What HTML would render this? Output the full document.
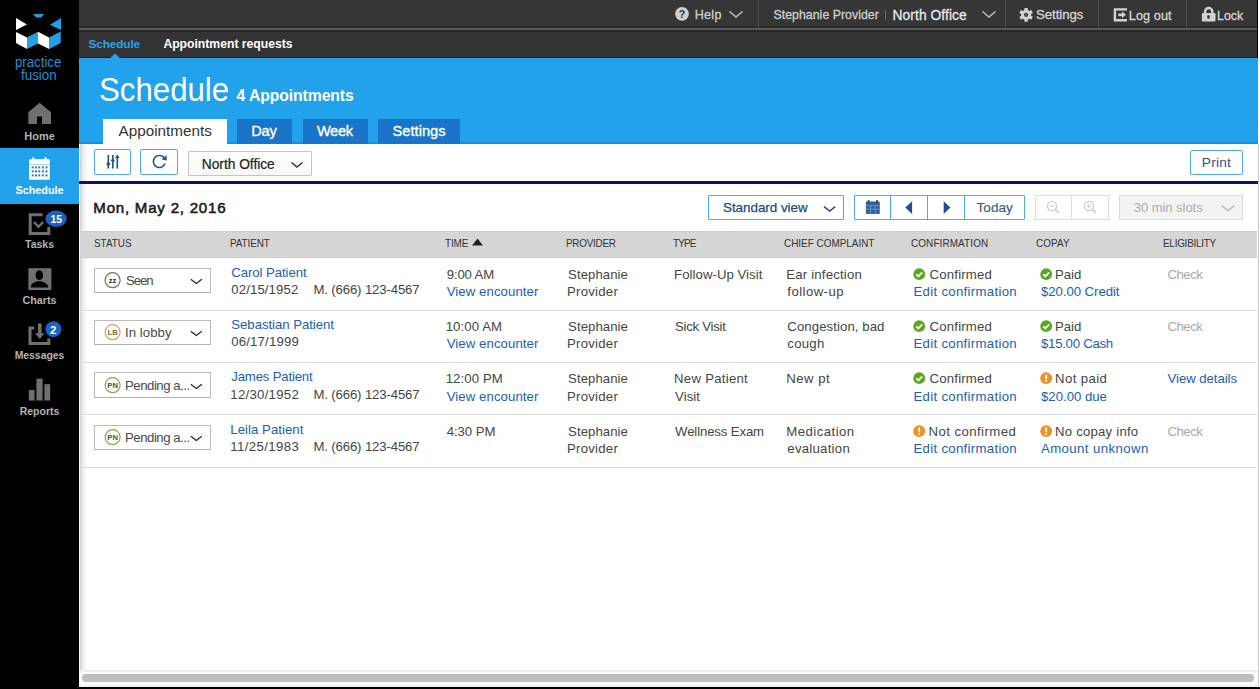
<!DOCTYPE html>
<html><head><meta charset="utf-8"><style>
html,body{margin:0;padding:0;}
body{width:1260px;height:689px;overflow:hidden;position:relative;background:#fff;font-family:"Liberation Sans",sans-serif;}
.t{position:absolute;white-space:nowrap;}
.r{position:absolute;}
</style></head><body>
<div class="r" style="left:0px;top:0px;width:79px;height:689px;background:#000;"></div>
<svg class="r" style="left:14px;top:12px;" width="50" height="40" viewBox="0 0 50 40"><polygon points="19,2 30,2 27,5.6 22,5.6" fill="#22a0e6"/><polygon points="2,6 13,12.5 2,18" fill="#fff"/><polygon points="47,6 47,18 36,12.8" fill="#22a0e6"/><polygon points="2,20 13,25.6 13,37 2,31" fill="#fff"/><polygon points="13,25.6 24,19.8 24,31.6 13,37" fill="#22a0e6"/><polygon points="24,19.8 35,25.6 35,37 24,31.6" fill="#fff"/><polygon points="35,25.6 46.7,19.6 46.7,31 35,37" fill="#22a0e6"/></svg>
<div class="t" style="left:15.30px;top:51.60px;font-size:15.4px;line-height:19px;color:#1e8fd6;transform:scaleX(0.8587999599433483);transform-origin:0 0;">practice</div>
<div class="t" style="left:20.80px;top:64.80px;font-size:15.4px;line-height:19px;color:#1e8fd6;transform:scaleX(0.8689272631735564);transform-origin:0 0;">fusion</div>
<svg class="r" style="left:27px;top:101px;" width="26" height="25" viewBox="0 0 26 25"><polygon points="12.6,1.7 24,11.2 24,23 15,23 15,15.5 10,15.5 10,23 1.3,23 1.3,11.2" fill="#6f6f6f"/></svg>
<div class="t" style="left:39.50px;top:129.20px;font-size:11px;line-height:14px;color:#b3b3b3;font-weight:700;transform:translateX(-50%);">Home</div>
<div class="r" style="left:0px;top:148px;width:79px;height:56px;background:#22a2ea;"></div>
<svg class="r" style="left:28px;top:156px;" width="23" height="25" viewBox="0 0 23 25"><rect x="1" y="3.2" width="20.8" height="20.6" rx="1" fill="#fff"/><rect x="4.2" y="1.5" width="2.2" height="3" fill="#fff"/><rect x="16.5" y="1.5" width="2.2" height="3" fill="#fff"/><rect x="1" y="8" width="20.8" height="0.8" fill="#8fd0f5"/><rect x="3.7" y="10.4" width="2" height="2" fill="#2f75b5"/><rect x="7" y="10.4" width="2" height="2" fill="#2f75b5"/><rect x="10.2" y="10.4" width="2" height="2" fill="#2f75b5"/><rect x="13.9" y="10.4" width="2" height="2" fill="#2f75b5"/><rect x="17.5" y="10.4" width="2" height="2" fill="#2f75b5"/><rect x="3.7" y="14.4" width="2" height="2" fill="#2f75b5"/><rect x="7" y="14.4" width="2" height="2" fill="#2f75b5"/><rect x="10.2" y="14.4" width="2" height="2" fill="#2f75b5"/><rect x="13.9" y="14.4" width="2" height="2" fill="#2f75b5"/><rect x="17.5" y="14.4" width="2" height="2" fill="#2f75b5"/><rect x="3.7" y="18.4" width="2" height="2" fill="#2f75b5"/><rect x="7" y="18.4" width="2" height="2" fill="#2f75b5"/><rect x="10.2" y="18.4" width="2" height="2" fill="#2f75b5"/><rect x="13.9" y="18.4" width="2" height="2" fill="#2f75b5"/><rect x="17.5" y="18.4" width="2" height="2" fill="#2f75b5"/></svg>
<div class="t" style="left:39.50px;top:182.60px;font-size:10.8px;line-height:14px;color:#fff;font-weight:700;transform:translateX(-50%);">Schedule</div>
<svg class="r" style="left:27px;top:209px;" width="42" height="28" viewBox="0 0 42 28"><path d="M15.5,5.8 H3.2 V24.5 H21.8 V18" fill="none" stroke="#707070" stroke-width="3"/><path d="M7,13 L11.5,17.8 L16.2,13" fill="none" stroke="#707070" stroke-width="2.4"/><ellipse cx="29.1" cy="9.8" rx="10.6" ry="8.2" fill="#1a64bf"/></svg>
<div class="t" style="left:56.30px;top:212.60px;font-size:10.5px;line-height:13px;color:#fff;font-weight:700;transform:translateX(-50%);">15</div>
<div class="t" style="left:39.50px;top:238.40px;font-size:10.5px;line-height:13px;color:#b3b3b3;font-weight:700;transform:translateX(-50%);">Tasks</div>
<svg class="r" style="left:28px;top:268px;" width="24" height="23" viewBox="0 0 24 23"><rect x="0.4" y="0.2" width="23" height="21.8" fill="#707070"/><ellipse cx="11.3" cy="7.2" rx="3.7" ry="4.9" fill="#000"/><path d="M2.6,19.5 C3,15.5 6,14.2 9.3,13.2 L13.3,13.2 C16.6,14.2 19.8,15.5 20.4,19.5 Z" fill="#000"/></svg>
<div class="t" style="left:39.50px;top:292.80px;font-size:10.8px;line-height:14px;color:#b3b3b3;font-weight:700;transform:translateX(-50%);">Charts</div>
<svg class="r" style="left:27px;top:321px;" width="36" height="26" viewBox="0 0 36 26"><path d="M7.3,7 H3 V22.4 H21.8 V17.5" fill="none" stroke="#707070" stroke-width="3"/><rect x="11" y="2.5" width="3.6" height="10.5" fill="#707070"/><polygon points="8,12.3 17.5,12.3 12.8,18" fill="#707070"/><circle cx="26.4" cy="8.2" r="8" fill="#1a64bf"/></svg>
<div class="t" style="left:53.30px;top:323.20px;font-size:11.5px;line-height:14px;color:#fff;font-weight:700;transform:translateX(-50%);">2</div>
<div class="t" style="left:39.50px;top:349.40px;font-size:10.4px;line-height:13px;color:#b3b3b3;font-weight:700;transform:translateX(-50%);">Messages</div>
<svg class="r" style="left:28px;top:378px;" width="24" height="24" viewBox="0 0 24 24"><rect x="0.8" y="12" width="5.8" height="10.5" fill="#707070"/><rect x="8.4" y="0.7" width="6.2" height="21.8" fill="#707070"/><rect x="16.4" y="6.2" width="5.8" height="16.3" fill="#707070"/></svg>
<div class="t" style="left:39.50px;top:404.60px;font-size:10.5px;line-height:13px;color:#b3b3b3;font-weight:700;transform:translateX(-50%);">Reports</div>
<div class="r" style="left:79px;top:0px;width:1178px;height:28px;background:#363636;"></div>
<div class="r" style="left:79px;top:26px;width:1178px;height:1.5px;background:#2c2c2c;"></div>
<div class="r" style="left:79px;top:28px;width:1178px;height:2px;background:#585858;"></div>
<div class="r" style="left:79px;top:30px;width:1178px;height:28px;background:#333333;"></div>
<div class="r" style="left:79px;top:30px;width:1178px;height:1.5px;background:#272727;"></div>
<div class="r" style="left:79px;top:57px;width:1178px;height:1.5px;background:#1f1f1f;"></div>
<div class="r" style="left:1257px;top:0px;width:1.2px;height:58px;background:#000;"></div>
<div class="r" style="left:757.5px;top:0px;width:1px;height:28px;background:#4f4f4f;"></div>
<div class="r" style="left:1004.5px;top:0px;width:1px;height:28px;background:#4f4f4f;"></div>
<div class="r" style="left:1098px;top:0px;width:1px;height:28px;background:#4f4f4f;"></div>
<div class="r" style="left:1186px;top:0px;width:1px;height:28px;background:#4f4f4f;"></div>
<svg class="r" style="left:674px;top:6px;" width="16" height="16" viewBox="0 0 16 16"><circle cx="8" cy="7.8" r="6.9" fill="#d0d0d0"/><text x="8" y="11.7" text-anchor="middle" font-family="Liberation Sans" font-weight="700" font-size="10.5" fill="#303030">?</text></svg>
<div class="t" style="left:694.70px;top:7.20px;font-size:12.5px;line-height:16px;color:#cfcfcf;letter-spacing:0.315px;-webkit-text-stroke:0.3px #cfcfcf;">Help</div>
<svg class="r" style="left:728px;top:10px;" width="16" height="9" viewBox="0 0 16 9"><path d="M1.5,1.5 L8,7 L14.5,1.5" fill="none" stroke="#bdbdbd" stroke-width="1.6"/></svg>
<div class="t" style="left:773.50px;top:8.40px;font-size:12.35px;line-height:15px;color:#cfcfcf;letter-spacing:0.019px;-webkit-text-stroke:0.3px #cfcfcf;">Stephanie Provider</div>
<div class="r" style="left:885px;top:9.5px;width:1px;height:10.5px;background:#6a6a6a;"></div>
<div class="t" style="left:892.60px;top:7.20px;font-size:13.8px;line-height:17px;color:#e6e6e6;letter-spacing:0.065px;-webkit-text-stroke:0.3px #e6e6e6;">North Office</div>
<svg class="r" style="left:981px;top:10px;" width="16" height="9" viewBox="0 0 16 9"><path d="M1.5,1.5 L8,7 L14.5,1.5" fill="none" stroke="#bdbdbd" stroke-width="1.6"/></svg>
<svg class="r" style="left:1018px;top:7px;" width="16" height="16" viewBox="0 0 16 16"><g transform="translate(8.1,7.85)" fill="#d2d2d2"><rect x="-1.7" y="-6.9" width="3.4" height="3.4" rx="0.6" transform="rotate(0)"/><rect x="-1.7" y="-6.9" width="3.4" height="3.4" rx="0.6" transform="rotate(60)"/><rect x="-1.7" y="-6.9" width="3.4" height="3.4" rx="0.6" transform="rotate(120)"/><rect x="-1.7" y="-6.9" width="3.4" height="3.4" rx="0.6" transform="rotate(180)"/><rect x="-1.7" y="-6.9" width="3.4" height="3.4" rx="0.6" transform="rotate(240)"/><rect x="-1.7" y="-6.9" width="3.4" height="3.4" rx="0.6" transform="rotate(300)"/><circle r="5.1" /><circle r="2.1" fill="#353535"/><circle r="0.8" fill="#888"/></g></svg>
<div class="t" style="left:1036.00px;top:7.40px;font-size:13.2px;line-height:16px;color:#d6d6d6;letter-spacing:-0.037px;-webkit-text-stroke:0.3px #d6d6d6;">Settings</div>
<svg class="r" style="left:1112px;top:7px;" width="16" height="16" viewBox="0 0 16 16"><path d="M15,2.4 H2.9 V13.3 H15" fill="none" stroke="#d2d2d2" stroke-width="2.4"/><path d="M6.3,7.85 H10.5" stroke="#d2d2d2" stroke-width="2.6"/><polygon points="10,4.6 14,7.85 10,11.1" fill="#d2d2d2"/></svg>
<div class="t" style="left:1128.80px;top:7.60px;font-size:12.65px;line-height:16px;color:#d6d6d6;letter-spacing:0.090px;-webkit-text-stroke:0.3px #d6d6d6;">Log out</div>
<svg class="r" style="left:1201px;top:6px;" width="16" height="17" viewBox="0 0 16 17"><path d="M4.1,7.5 V5.6 A3.6,3.6 0 0 1 11.3,5.6 V7.5" fill="none" stroke="#d2d2d2" stroke-width="2.5"/><rect x="0.9" y="7" width="13.6" height="8.5" rx="1.2" fill="#d2d2d2"/><ellipse cx="7.5" cy="10.9" rx="1.3" ry="2" fill="#353535"/></svg>
<div class="t" style="left:1217.00px;top:8.60px;font-size:12.3px;line-height:15px;color:#d6d6d6;letter-spacing:0.058px;-webkit-text-stroke:0.3px #d6d6d6;">Lock</div>
<div class="t" style="left:88.60px;top:36.20px;font-size:11.7px;line-height:15px;color:#2aa4ea;font-weight:700;letter-spacing:-0.066px;">Schedule</div>
<div class="t" style="left:163.40px;top:37.20px;font-size:12.2px;line-height:15px;color:#fff;font-weight:700;letter-spacing:-0.008px;">Appointment requests</div>
<div class="r" style="left:79px;top:58px;width:1179px;height:86px;background:#22a2ea;"></div>
<div class="r" style="left:79px;top:142px;width:1179px;height:2px;background:#1a8ed6;"></div>
<svg class="r" style="left:108px;top:53px;" width="14" height="6" viewBox="0 0 14 6"><polygon points="1,6 7,0.5 13,6" fill="#22a2ea"/></svg>
<div class="t" style="left:98.75px;top:69.00px;font-size:33px;line-height:41px;color:#fff;transform:scaleX(0.9456254670560756);transform-origin:0 0;">Schedule</div>
<div class="t" style="left:236.50px;top:86.00px;font-size:15.7px;line-height:20px;color:#fff;font-weight:700;letter-spacing:-0.054px;">4 Appointments</div>
<div class="r" style="left:103px;top:118.5px;width:124px;height:26px;background:#fff;"></div>
<div class="t" style="left:118.50px;top:120.60px;font-size:15.3px;line-height:19px;color:#333;letter-spacing:-0.017px;">Appointments</div>
<div class="r" style="left:237px;top:118.5px;width:55px;height:25.5px;background:#1a74c8;"></div>
<div class="t" style="left:251.30px;top:121.80px;font-size:14.6px;line-height:18px;color:#fff;letter-spacing:-0.228px;-webkit-text-stroke:0.35px #fff;">Day</div>
<div class="r" style="left:302.5px;top:118.5px;width:65.5px;height:25.5px;background:#1a74c8;"></div>
<div class="t" style="left:316.90px;top:121.80px;font-size:14.6px;line-height:18px;color:#fff;letter-spacing:-0.314px;-webkit-text-stroke:0.35px #fff;">Week</div>
<div class="r" style="left:378px;top:118.5px;width:82px;height:25.5px;background:#1a74c8;"></div>
<div class="t" style="left:392.60px;top:121.80px;font-size:14.6px;line-height:18px;color:#fff;letter-spacing:0.024px;-webkit-text-stroke:0.35px #fff;">Settings</div>
<div class="r" style="left:79px;top:144px;width:1178px;height:37px;background:#fff;"></div>
<div class="r" style="left:79px;top:144px;width:1px;height:545px;background:#f4f4f4;"></div>
<div class="r" style="left:80px;top:144px;width:1px;height:545px;background:#d2d2d2;"></div>
<div class="r" style="left:81px;top:144px;width:6px;height:545px;background:linear-gradient(90deg,#e2e2e2,rgba(255,255,255,0));"></div>
<div class="r" style="left:79px;top:181px;width:1179px;height:3px;background:#07136e;"></div>
<div class="r" style="left:93.5px;top:148.8px;width:37.5px;height:26px;background:#fff;box-sizing:border-box;border:1.5px solid #52aae3;border-radius:2px;"></div>
<svg class="r" style="left:104px;top:153px;" width="18" height="18" viewBox="0 0 18 18"><path d="M4.3,2 V15.5 M8.8,2 V15.5 M13.3,4.5 V15.5" stroke="#1f5190" stroke-width="1.6"/><polygon points="4.3,8.8 6.4,11 4.3,13.2 2.2,11" fill="#1f5190"/><polygon points="8.8,5.6 10.9,7.6 8.8,9.6 6.7,7.6" fill="#1f5190"/><polygon points="13.3,1.5 15.6,5 11,5" fill="#1f5190"/></svg>
<div class="r" style="left:140.2px;top:148.8px;width:37.5px;height:26px;background:#fff;box-sizing:border-box;border:1.5px solid #52aae3;border-radius:2px;"></div>
<svg class="r" style="left:150px;top:152px;" width="18" height="18" viewBox="0 0 18 18"><path d="M14.6,6.6 A6,6 0 1 0 15,11.5" fill="none" stroke="#1f5190" stroke-width="1.6"/><polygon points="16.5,3.2 16.8,8.6 11.6,7.6" fill="#1f5190"/></svg>
<div class="r" style="left:188px;top:151px;width:124px;height:25px;background:#fff;box-sizing:border-box;border:1px solid #c4c4c4;border-radius:1px;background:linear-gradient(#fff,#f8f8f8);"></div>
<div class="t" style="left:201.80px;top:155.60px;font-size:13.8px;line-height:17px;color:#222;letter-spacing:-0.035px;-webkit-text-stroke:0.2px #222;">North Office</div>
<svg class="r" style="left:290px;top:161px;" width="14" height="8" viewBox="0 0 14 8"><path d="M1.5,1.5 L7,6 L12.5,1.5" fill="none" stroke="#333" stroke-width="1.5"/></svg>
<div class="r" style="left:1190px;top:149.5px;width:53px;height:25px;background:#fff;box-sizing:border-box;border:1.5px solid #52aae3;border-radius:2px;"></div>
<div class="t" style="left:1201.80px;top:154.00px;font-size:13.7px;line-height:17px;color:#33507a;letter-spacing:0.215px;">Print</div>
<div class="r" style="left:1257.6px;top:144px;width:1.4px;height:545px;background:#cacaca;"></div>
<div class="t" style="left:93.30px;top:198.20px;font-size:15.1px;line-height:19px;color:#1a1a1a;letter-spacing:0.765px;-webkit-text-stroke:0.55px #1a1a1a;">Mon, May 2, 2016</div>
<div class="r" style="left:708px;top:194.7px;width:136px;height:25px;background:#fff;box-sizing:border-box;border:1.5px solid #52aae3;border-radius:1px;"></div>
<div class="t" style="left:723.00px;top:198.90px;font-size:13.4px;line-height:17px;color:#1e4a80;letter-spacing:-0.015px;-webkit-text-stroke:0.25px #1e4a80;">Standard view</div>
<svg class="r" style="left:821px;top:204px;" width="16" height="9" viewBox="0 0 16 9"><path d="M3,2.6 L8.6,7 L14.2,2.6" fill="none" stroke="#1f5190" stroke-width="1.5"/></svg>
<div class="r" style="left:854.3px;top:194.7px;width:170.5px;height:25px;background:#fff;box-sizing:border-box;border:1.5px solid #52aae3;border-radius:1px;"></div>
<div class="r" style="left:890px;top:194.7px;width:1.3px;height:25px;background:#52aae3;"></div>
<div class="r" style="left:926.8px;top:194.7px;width:1.3px;height:25px;background:#52aae3;"></div>
<div class="r" style="left:963.8px;top:194.7px;width:1.3px;height:25px;background:#52aae3;"></div>
<svg class="r" style="left:865px;top:199px;" width="16" height="16" viewBox="0 0 16 16"><rect x="0.9" y="2.6" width="13.9" height="12.4" rx="1" fill="#1f5190" opacity="0.9"/><rect x="2.6" y="1.2" width="2" height="3" fill="#1f5190"/><rect x="11" y="1.2" width="2" height="3" fill="#1f5190"/><path d="M0.9,6.6 H14.8 M0.9,10.2 H14.8 M5.5,6.6 V15 M10.2,6.6 V15" stroke="#6e9ac8" stroke-width="0.8"/></svg>
<svg class="r" style="left:903px;top:200px;" width="12" height="15" viewBox="0 0 12 15"><polygon points="9.1,1.2 9.1,13.9 2.3,7.5" fill="#1f5190"/></svg>
<svg class="r" style="left:941px;top:200px;" width="12" height="15" viewBox="0 0 12 15"><polygon points="2.7,1.2 2.7,13.9 9.4,7.5" fill="#1f5190"/></svg>
<div class="t" style="left:976.60px;top:199.00px;font-size:13.6px;line-height:17px;color:#3a5a85;letter-spacing:-0.019px;-webkit-text-stroke:0.15px #3a5a85;">Today</div>
<div class="r" style="left:1035px;top:194.7px;width:73.7px;height:25px;background:#fff;box-sizing:border-box;border:1px solid #dedede;"></div>
<div class="r" style="left:1071px;top:194.7px;width:1px;height:25px;background:#dedede;"></div>
<svg class="r" style="left:1045px;top:199px;" width="16" height="16" viewBox="0 0 16 16"><circle cx="7" cy="7" r="4.6" fill="none" stroke="#cfcfcf" stroke-width="1.4"/><path d="M10.3,10.3 L13.8,13.8" stroke="#cfcfcf" stroke-width="1.8"/><path d="M4.8,7 H9.2" stroke="#cfcfcf" stroke-width="1.2"/></svg>
<svg class="r" style="left:1082px;top:199px;" width="16" height="16" viewBox="0 0 16 16"><circle cx="7" cy="7" r="4.6" fill="none" stroke="#cfcfcf" stroke-width="1.4"/><path d="M10.3,10.3 L13.8,13.8" stroke="#cfcfcf" stroke-width="1.8"/><path d="M4.8,7 H9.2 M7,4.8 V9.2" stroke="#cfcfcf" stroke-width="1.2"/></svg>
<div class="r" style="left:1119px;top:194.7px;width:124px;height:25px;background:#f3f3f3;box-sizing:border-box;border:1px solid #dcdcdc;"></div>
<div class="t" style="left:1133.70px;top:200.00px;font-size:13px;line-height:16px;color:#ababab;letter-spacing:-0.033px;">30 min slots</div>
<svg class="r" style="left:1220px;top:204px;" width="16" height="9" viewBox="0 0 16 9"><path d="M1.5,1.5 L8,6.5 L14.5,1.5" fill="none" stroke="#b8b8b8" stroke-width="1.4"/></svg>
<div class="r" style="left:80px;top:231px;width:1177px;height:27px;background:#d6d6d6;"></div>
<div class="r" style="left:80px;top:231px;width:1177px;height:1px;background:#cecece;"></div>
<div class="r" style="left:80px;top:257px;width:1177px;height:1px;background:#cdcdcd;"></div>
<div class="t" style="left:94.00px;top:235.80px;font-size:11px;line-height:14px;color:#333;letter-spacing:-0.018px;transform:scaleX(0.9);transform-origin:0 0;">STATUS</div>
<div class="t" style="left:230.20px;top:235.80px;font-size:11px;line-height:14px;color:#333;letter-spacing:-0.090px;transform:scaleX(0.9);transform-origin:0 0;">PATIENT</div>
<div class="t" style="left:445.30px;top:235.80px;font-size:11px;line-height:14px;color:#333;letter-spacing:-0.128px;transform:scaleX(0.9);transform-origin:0 0;">TIME</div>
<svg class="r" style="left:471px;top:237px;" width="14" height="10" viewBox="0 0 14 10"><polygon points="1,8.5 6.5,1.5 12,8.5" fill="#222"/></svg>
<div class="t" style="left:566.20px;top:235.80px;font-size:11px;line-height:14px;color:#333;letter-spacing:-0.279px;transform:scaleX(0.9);transform-origin:0 0;">PROVIDER</div>
<div class="t" style="left:672.80px;top:235.80px;font-size:11px;line-height:14px;color:#333;letter-spacing:-0.946px;transform:scaleX(0.9);transform-origin:0 0;">TYPE</div>
<div class="t" style="left:784.10px;top:235.80px;font-size:11px;line-height:14px;color:#333;letter-spacing:0.011px;transform:scaleX(0.9);transform-origin:0 0;">CHIEF COMPLAINT</div>
<div class="t" style="left:910.60px;top:235.80px;font-size:11px;line-height:14px;color:#333;letter-spacing:0.145px;transform:scaleX(0.9);transform-origin:0 0;">CONFIRMATION</div>
<div class="t" style="left:1036.30px;top:235.80px;font-size:11px;line-height:14px;color:#333;letter-spacing:0.143px;transform:scaleX(0.9);transform-origin:0 0;">COPAY</div>
<div class="t" style="left:1163.10px;top:235.80px;font-size:11px;line-height:14px;color:#333;letter-spacing:-0.263px;transform:scaleX(0.9);transform-origin:0 0;">ELIGIBILITY</div>
<div class="r" style="left:93.6px;top:267.5px;width:117.2px;height:25.5px;background:#fff;box-sizing:border-box;border:1px solid #bababa;border-bottom-color:#b0b0b0;border-radius:1px;"></div>
<svg class="r" style="left:104px;top:272px;" width="18" height="18" viewBox="0 0 18 18"><circle cx="8.6" cy="8.2" r="7.5" fill="none" stroke="#6f6f6f" stroke-width="1.2"/><text x="8.6" y="10.8" text-anchor="middle" font-family="Liberation Sans" font-weight="700" font-size="7.6" fill="#333">zz</text></svg>
<div class="t" style="left:126.00px;top:273.00px;font-size:13.2px;line-height:16px;color:#4a4a4a;letter-spacing:-1.055px;">Seen</div>
<svg class="r" style="left:189px;top:277px;" width="15" height="9" viewBox="0 0 15 9"><path d="M1.8,2.2 L7.3,6.5 L12.8,2.2" fill="none" stroke="#2a2a2a" stroke-width="1.3"/></svg>
<div class="t" style="left:231.30px;top:264.60px;font-size:13.2px;line-height:16px;color:#1b60b3;letter-spacing:-0.072px;">Carol Patient</div>
<div class="t" style="left:231.30px;top:281.80px;font-size:13.2px;line-height:16px;color:#454545;letter-spacing:0.104px;">02/15/1952</div>
<div class="t" style="left:313.40px;top:281.80px;font-size:13.2px;line-height:16px;color:#454545;letter-spacing:-0.141px;">M. (666) 123-4567</div>
<div class="t" style="left:446.70px;top:266.70px;font-size:13.2px;line-height:16px;color:#454545;letter-spacing:-0.138px;">9:00 AM</div>
<div class="t" style="left:446.70px;top:284.00px;font-size:13.2px;line-height:16px;color:#1b60b3;letter-spacing:0.079px;">View encounter</div>
<div class="t" style="left:568.10px;top:266.70px;font-size:13.2px;line-height:16px;color:#454545;letter-spacing:0.042px;">Stephanie</div>
<div class="t" style="left:567.10px;top:284.00px;font-size:13.2px;line-height:16px;color:#454545;letter-spacing:0.227px;">Provider</div>
<div class="t" style="left:674.10px;top:266.70px;font-size:13.2px;line-height:16px;color:#454545;letter-spacing:0.041px;">Follow-Up Visit</div>
<div class="t" style="left:786.30px;top:266.70px;font-size:13.2px;line-height:16px;color:#454545;letter-spacing:0.186px;">Ear infection</div>
<div class="t" style="left:787.30px;top:284.00px;font-size:13.2px;line-height:16px;color:#454545;letter-spacing:0.432px;">follow-up</div>
<svg class="r" style="left:913.2px;top:267.6px;" width="13" height="13" viewBox="0 0 13 13"><circle cx="6.2" cy="6.2" r="5.9" fill="#5aa81f"/><path d="M3.3,6.4 L5.4,8.4 L9.2,4.4" fill="none" stroke="#fff" stroke-width="1.8"/></svg>
<div class="t" style="left:929.60px;top:266.70px;font-size:13.2px;line-height:16px;color:#454545;letter-spacing:0.175px;">Confirmed</div>
<div class="t" style="left:913.50px;top:284.00px;font-size:13.2px;line-height:16px;color:#1b60b3;letter-spacing:0.307px;">Edit confirmation</div>
<svg class="r" style="left:1040.2px;top:267.6px;" width="13" height="13" viewBox="0 0 13 13"><circle cx="6.2" cy="6.2" r="5.9" fill="#5aa81f"/><path d="M3.3,6.4 L5.4,8.4 L9.2,4.4" fill="none" stroke="#fff" stroke-width="1.8"/></svg>
<div class="t" style="left:1055.00px;top:266.70px;font-size:13.2px;line-height:16px;color:#454545;letter-spacing:-0.020px;">Paid</div>
<div class="t" style="left:1041.00px;top:284.00px;font-size:13.2px;line-height:16px;color:#1b60b3;letter-spacing:-0.059px;">$20.00 Credit</div>
<div class="t" style="left:1167.50px;top:266.70px;font-size:13.2px;line-height:16px;color:#a9a9a9;letter-spacing:-0.521px;">Check</div>
<div class="r" style="left:93.6px;top:319.85px;width:117.2px;height:25.5px;background:#fff;box-sizing:border-box;border:1px solid #bababa;border-bottom-color:#b0b0b0;border-radius:1px;"></div>
<svg class="r" style="left:104px;top:324.35px;" width="18" height="18" viewBox="0 0 18 18"><circle cx="8.6" cy="8.2" r="7.5" fill="none" stroke="#d4a04e" stroke-width="1.2"/><text x="8.6" y="10.8" text-anchor="middle" font-family="Liberation Sans" font-weight="700" font-size="7.6" fill="#8a6a30">LB</text></svg>
<div class="t" style="left:125.00px;top:325.35px;font-size:13.2px;line-height:16px;color:#4a4a4a;letter-spacing:0.044px;">In lobby</div>
<svg class="r" style="left:189px;top:329.35px;" width="15" height="9" viewBox="0 0 15 9"><path d="M1.8,2.2 L7.3,6.5 L12.8,2.2" fill="none" stroke="#2a2a2a" stroke-width="1.3"/></svg>
<div class="t" style="left:231.30px;top:316.95px;font-size:13.2px;line-height:16px;color:#1b60b3;letter-spacing:-0.044px;">Sebastian Patient</div>
<div class="t" style="left:231.30px;top:334.15px;font-size:13.2px;line-height:16px;color:#454545;letter-spacing:0.159px;">06/17/1999</div>
<div class="t" style="left:445.70px;top:319.05px;font-size:13.2px;line-height:16px;color:#454545;letter-spacing:0.091px;">10:00 AM</div>
<div class="t" style="left:446.70px;top:336.35px;font-size:13.2px;line-height:16px;color:#1b60b3;letter-spacing:0.079px;">View encounter</div>
<div class="t" style="left:568.10px;top:319.05px;font-size:13.2px;line-height:16px;color:#454545;letter-spacing:0.042px;">Stephanie</div>
<div class="t" style="left:567.10px;top:336.35px;font-size:13.2px;line-height:16px;color:#454545;letter-spacing:0.227px;">Provider</div>
<div class="t" style="left:675.10px;top:319.05px;font-size:13.2px;line-height:16px;color:#454545;letter-spacing:-0.276px;">Sick Visit</div>
<div class="t" style="left:787.30px;top:319.05px;font-size:13.2px;line-height:16px;color:#454545;letter-spacing:0.078px;">Congestion, bad</div>
<div class="t" style="left:787.30px;top:336.35px;font-size:13.2px;line-height:16px;color:#454545;letter-spacing:0.251px;">cough</div>
<svg class="r" style="left:913.2px;top:319.95000000000005px;" width="13" height="13" viewBox="0 0 13 13"><circle cx="6.2" cy="6.2" r="5.9" fill="#5aa81f"/><path d="M3.3,6.4 L5.4,8.4 L9.2,4.4" fill="none" stroke="#fff" stroke-width="1.8"/></svg>
<div class="t" style="left:929.60px;top:319.05px;font-size:13.2px;line-height:16px;color:#454545;letter-spacing:0.175px;">Confirmed</div>
<div class="t" style="left:913.50px;top:336.35px;font-size:13.2px;line-height:16px;color:#1b60b3;letter-spacing:0.307px;">Edit confirmation</div>
<svg class="r" style="left:1040.2px;top:319.95000000000005px;" width="13" height="13" viewBox="0 0 13 13"><circle cx="6.2" cy="6.2" r="5.9" fill="#5aa81f"/><path d="M3.3,6.4 L5.4,8.4 L9.2,4.4" fill="none" stroke="#fff" stroke-width="1.8"/></svg>
<div class="t" style="left:1055.00px;top:319.05px;font-size:13.2px;line-height:16px;color:#454545;letter-spacing:-0.020px;">Paid</div>
<div class="t" style="left:1041.00px;top:336.35px;font-size:13.2px;line-height:16px;color:#1b60b3;letter-spacing:-0.265px;">$15.00 Cash</div>
<div class="t" style="left:1167.50px;top:319.05px;font-size:13.2px;line-height:16px;color:#a9a9a9;letter-spacing:-0.521px;">Check</div>
<div class="r" style="left:93.6px;top:372.2px;width:117.2px;height:25.5px;background:#fff;box-sizing:border-box;border:1px solid #bababa;border-bottom-color:#b0b0b0;border-radius:1px;"></div>
<svg class="r" style="left:104px;top:376.7px;" width="18" height="18" viewBox="0 0 18 18"><circle cx="8.6" cy="8.2" r="7.5" fill="none" stroke="#86a844" stroke-width="1.2"/><text x="8.6" y="10.8" text-anchor="middle" font-family="Liberation Sans" font-weight="700" font-size="7.6" fill="#3d5a22">PN</text></svg>
<div class="t" style="left:125.00px;top:377.70px;font-size:13.2px;line-height:16px;color:#4a4a4a;letter-spacing:-0.475px;">Pending a...</div>
<svg class="r" style="left:189px;top:381.7px;" width="15" height="9" viewBox="0 0 15 9"><path d="M1.8,2.2 L7.3,6.5 L12.8,2.2" fill="none" stroke="#2a2a2a" stroke-width="1.3"/></svg>
<div class="t" style="left:231.30px;top:369.30px;font-size:13.2px;line-height:16px;color:#1b60b3;letter-spacing:-0.183px;">James Patient</div>
<div class="t" style="left:230.30px;top:386.50px;font-size:13.2px;line-height:16px;color:#454545;letter-spacing:0.270px;">12/30/1952</div>
<div class="t" style="left:313.40px;top:386.50px;font-size:13.2px;line-height:16px;color:#454545;letter-spacing:-0.141px;">M. (666) 123-4567</div>
<div class="t" style="left:445.70px;top:371.40px;font-size:13.2px;line-height:16px;color:#454545;letter-spacing:0.091px;">12:00 PM</div>
<div class="t" style="left:446.70px;top:388.70px;font-size:13.2px;line-height:16px;color:#1b60b3;letter-spacing:0.079px;">View encounter</div>
<div class="t" style="left:568.10px;top:371.40px;font-size:13.2px;line-height:16px;color:#454545;letter-spacing:0.042px;">Stephanie</div>
<div class="t" style="left:567.10px;top:388.70px;font-size:13.2px;line-height:16px;color:#454545;letter-spacing:0.227px;">Provider</div>
<div class="t" style="left:674.10px;top:371.40px;font-size:13.2px;line-height:16px;color:#454545;letter-spacing:0.256px;">New Patient</div>
<div class="t" style="left:675.10px;top:388.70px;font-size:13.2px;line-height:16px;color:#454545;letter-spacing:0.047px;">Visit</div>
<div class="t" style="left:786.30px;top:371.40px;font-size:13.2px;line-height:16px;color:#454545;letter-spacing:0.484px;">New pt</div>
<svg class="r" style="left:913.2px;top:372.3px;" width="13" height="13" viewBox="0 0 13 13"><circle cx="6.2" cy="6.2" r="5.9" fill="#5aa81f"/><path d="M3.3,6.4 L5.4,8.4 L9.2,4.4" fill="none" stroke="#fff" stroke-width="1.8"/></svg>
<div class="t" style="left:929.60px;top:371.40px;font-size:13.2px;line-height:16px;color:#454545;letter-spacing:0.175px;">Confirmed</div>
<div class="t" style="left:913.50px;top:388.70px;font-size:13.2px;line-height:16px;color:#1b60b3;letter-spacing:0.307px;">Edit confirmation</div>
<svg class="r" style="left:1040.2px;top:372.3px;" width="13" height="13" viewBox="0 0 13 13"><circle cx="6.2" cy="6.2" r="5.9" fill="#f0901e"/><rect x="5.3" y="2.6" width="1.8" height="4.6" fill="#fff"/><rect x="5.3" y="8.2" width="1.8" height="1.8" fill="#fff"/></svg>
<div class="t" style="left:1055.00px;top:371.40px;font-size:13.2px;line-height:16px;color:#454545;letter-spacing:0.402px;">Not paid</div>
<div class="t" style="left:1041.00px;top:388.70px;font-size:13.2px;line-height:16px;color:#1b60b3;letter-spacing:-0.008px;">$20.00 due</div>
<div class="t" style="left:1167.50px;top:371.40px;font-size:13.2px;line-height:16px;color:#1b60b3;letter-spacing:-0.049px;">View details</div>
<div class="r" style="left:93.6px;top:424.55px;width:117.2px;height:25.5px;background:#fff;box-sizing:border-box;border:1px solid #bababa;border-bottom-color:#b0b0b0;border-radius:1px;"></div>
<svg class="r" style="left:104px;top:429.05px;" width="18" height="18" viewBox="0 0 18 18"><circle cx="8.6" cy="8.2" r="7.5" fill="none" stroke="#86a844" stroke-width="1.2"/><text x="8.6" y="10.8" text-anchor="middle" font-family="Liberation Sans" font-weight="700" font-size="7.6" fill="#3d5a22">PN</text></svg>
<div class="t" style="left:125.00px;top:430.05px;font-size:13.2px;line-height:16px;color:#4a4a4a;letter-spacing:-0.475px;">Pending a...</div>
<svg class="r" style="left:189px;top:434.05px;" width="15" height="9" viewBox="0 0 15 9"><path d="M1.8,2.2 L7.3,6.5 L12.8,2.2" fill="none" stroke="#2a2a2a" stroke-width="1.3"/></svg>
<div class="t" style="left:230.30px;top:421.65px;font-size:13.2px;line-height:16px;color:#1b60b3;letter-spacing:0.040px;">Leila Patient</div>
<div class="t" style="left:230.30px;top:438.85px;font-size:13.2px;line-height:16px;color:#454545;letter-spacing:0.379px;">11/25/1983</div>
<div class="t" style="left:313.40px;top:438.85px;font-size:13.2px;line-height:16px;color:#454545;letter-spacing:-0.141px;">M. (666) 123-4567</div>
<div class="t" style="left:446.70px;top:423.75px;font-size:13.2px;line-height:16px;color:#454545;letter-spacing:-0.054px;">4:30 PM</div>
<div class="t" style="left:568.10px;top:423.75px;font-size:13.2px;line-height:16px;color:#454545;letter-spacing:0.042px;">Stephanie</div>
<div class="t" style="left:567.10px;top:441.05px;font-size:13.2px;line-height:16px;color:#454545;letter-spacing:0.227px;">Provider</div>
<div class="t" style="left:675.10px;top:423.75px;font-size:13.2px;line-height:16px;color:#454545;letter-spacing:-0.137px;">Wellness Exam</div>
<div class="t" style="left:786.30px;top:423.75px;font-size:13.2px;line-height:16px;color:#454545;letter-spacing:0.451px;">Medication</div>
<div class="t" style="left:787.30px;top:441.05px;font-size:13.2px;line-height:16px;color:#454545;letter-spacing:0.257px;">evaluation</div>
<svg class="r" style="left:913.2px;top:424.65000000000003px;" width="13" height="13" viewBox="0 0 13 13"><circle cx="6.2" cy="6.2" r="5.9" fill="#f0901e"/><rect x="5.3" y="2.6" width="1.8" height="4.6" fill="#fff"/><rect x="5.3" y="8.2" width="1.8" height="1.8" fill="#fff"/></svg>
<div class="t" style="left:928.60px;top:423.75px;font-size:13.2px;line-height:16px;color:#454545;letter-spacing:0.421px;">Not confirmed</div>
<div class="t" style="left:913.50px;top:441.05px;font-size:13.2px;line-height:16px;color:#1b60b3;letter-spacing:0.307px;">Edit confirmation</div>
<svg class="r" style="left:1040.2px;top:424.65000000000003px;" width="13" height="13" viewBox="0 0 13 13"><circle cx="6.2" cy="6.2" r="5.9" fill="#f0901e"/><rect x="5.3" y="2.6" width="1.8" height="4.6" fill="#fff"/><rect x="5.3" y="8.2" width="1.8" height="1.8" fill="#fff"/></svg>
<div class="t" style="left:1055.00px;top:423.75px;font-size:13.2px;line-height:16px;color:#454545;letter-spacing:0.208px;">No copay info</div>
<div class="t" style="left:1041.00px;top:441.05px;font-size:13.2px;line-height:16px;color:#1b60b3;letter-spacing:0.418px;">Amount unknown</div>
<div class="t" style="left:1167.50px;top:423.75px;font-size:13.2px;line-height:16px;color:#a9a9a9;letter-spacing:-0.521px;">Check</div>
<div class="r" style="left:80px;top:310px;width:1177px;height:1px;background:#dcdcdc;"></div>
<div class="r" style="left:80px;top:362px;width:1177px;height:1px;background:#dcdcdc;"></div>
<div class="r" style="left:80px;top:414px;width:1177px;height:1px;background:#dcdcdc;"></div>
<div class="r" style="left:80px;top:467px;width:1177px;height:1px;background:#dcdcdc;"></div>
<div class="r" style="left:80px;top:670px;width:1177px;height:17px;background:#fbfbfb;border-top:2px solid #ececec;border-bottom:2px solid #f0f0f0;box-sizing:border-box;"></div>
<div class="r" style="left:82px;top:674px;width:1172px;height:8px;background:#bfbfbf;border-radius:4px;"></div>
<div class="r" style="left:0px;top:687px;width:1260px;height:2px;background:#000;"></div>
</body></html>
